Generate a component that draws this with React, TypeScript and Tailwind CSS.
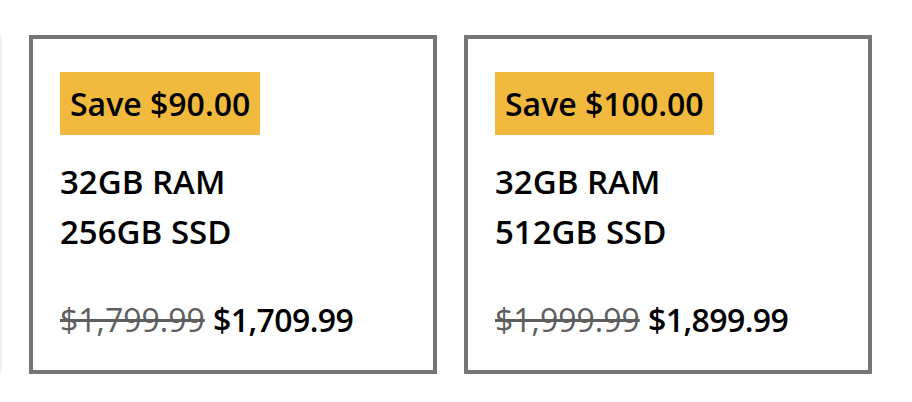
const deals = [
  { save: "$90.00", ram: "32GB RAM", ssd: "256GB SSD", was: "$1,799.99", now: "$1,709.99" },
  { save: "$100.00", ram: "32GB RAM", ssd: "512GB SSD", was: "$1,999.99", now: "$1,899.99" },
];

export default function App() {
  return (
    <div
      className="w-[912px] h-[402px] bg-white overflow-hidden text-black"
      style={{ fontFamily: '"Open Sans", "Noto Sans", sans-serif' }}
    >
      <div className="flex gap-[27px] pt-[35px]">
        {/* faded card peeking at the left edge */}
        <div className="shrink-0 w-[408px] h-[338px] ml-[-406px] border-[4px] border-[#f1f1f1]" />

        {deals.map((d) => (
          <div
            key={d.save}
            className="shrink-0 w-[408px] h-[339px] border-[4px] border-[#767676] bg-white px-[27px] pt-[33px] flex flex-col items-start"
          >
            {/* BADGE */}
            <div className="h-[63px] px-[10px] bg-[#f2b93f] flex items-center text-[32px] font-semibold leading-none">
              Save {d.save}
            </div>

            {/* SPECS */}
            <div className="mt-[22px] text-[33px] font-semibold leading-[50px]">
              <p>{d.ram}</p>
              <p>{d.ssd}</p>
            </div>

            {/* PRICE */}
            <p className="mt-[38px] text-[32px] leading-[50px]">
              <span className="line-through text-[#5e5e5e]">{d.was}</span>{" "}
              <span className="font-semibold tracking-[-0.6px]">{d.now}</span>
            </p>
          </div>
        ))}
      </div>
    </div>
  );
}
